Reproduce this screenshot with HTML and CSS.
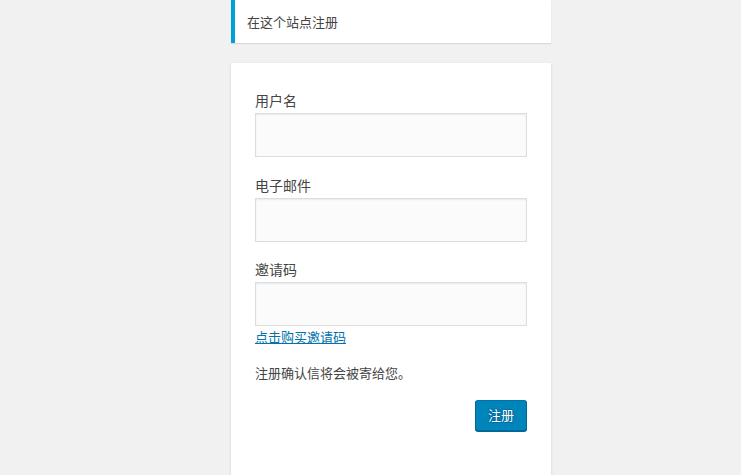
FILE: index.html
```html
<!DOCTYPE html>
<html lang="zh-CN">
<head>
<meta charset="utf-8">
<title>注册</title>
<link rel="stylesheet" href="styles.css">
</head>
<body>
<div class="login">
  <p class="message">在这个站点注册</p>
  <form class="register-form">
    <div class="field">
      <label class="field-label" for="user_login">用户名</label>
      <input class="input" type="text" id="user_login">
    </div>
    <div class="field">
      <label class="field-label" for="user_email">电子邮件</label>
      <input class="input" type="email" id="user_email">
    </div>
    <div class="field field-last">
      <label class="field-label" for="invite">邀请码</label>
      <input class="input" type="text" id="invite">
      <a class="buy-link" href="#">点击购买邀请码</a>
    </div>
    <p class="notice">注册确认信将会被寄给您。</p>
    <div class="submit-row">
      <button class="button-primary" type="button">注册</button>
    </div>
  </form>
</div>
</body>
</html>
```

FILE: styles.css
```css
html, body {
  margin: 0;
  padding: 0;
  background: #f1f1f1;
  height: 100%;
  overflow: hidden;
}
body {
  font-family: "Noto Sans CJK SC", "Noto Sans", "Liberation Sans", sans-serif;
  color: #444;
  font-size: 13px;
}
.login {
  width: 320px;
  margin-left: 231px;
}
.message {
  margin: 0 0 20px;
  background: #fff;
  border-left: 4px solid #00a0d2;
  box-shadow: 0 1px 1px rgba(0,0,0,.1);
  padding: 12px;
  line-height: 19px;
  font-size: 13px;
  color: #444;
}
.register-form {
  background: #fff;
  box-shadow: 0 1px 3px rgba(0,0,0,.13);
  padding: 27px 24px 46px;
}
.field {
  display: flex;
  flex-direction: column;
  margin-bottom: 17.5px;
}
.field-last {
  margin-bottom: 0;
}
.field-label {
  font-size: 14px;
  line-height: 21px;
  color: #444;
}
.input {
  box-sizing: border-box;
  width: 100%;
  height: 44px;
  margin: 2px 0 0;
  padding: 3px;
  font-size: 24px;
  background: #fbfbfb;
  border: 1px solid #ddd;
  box-shadow: inset 0 1px 2px rgba(0,0,0,.07);
  outline: none;
}
.buy-link {
  font-size: 13px;
  line-height: 21px;
  color: #0073aa;
  text-decoration: underline;
  align-self: flex-start;
}
.notice {
  margin: 16px 0 17px;
  font-size: 13px;
  line-height: 20px;
  color: #444;
}
.submit-row {
  display: flex;
  justify-content: flex-end;
}
.button-primary {
  box-sizing: border-box;
  height: 31px;
  width: 52px;
  padding: 0 12px 2px;
  font-family: inherit;
  font-size: 13px;
  line-height: 28px;
  color: #fff;
  background: #0085ba;
  border: 1px solid;
  border-color: #0073aa #006799 #006799;
  border-radius: 3px;
  box-shadow: 0 1px 0 #006799;
  text-shadow: 0 -1px 1px #006799, 1px 0 1px #006799, 0 1px 1px #006799, -1px 0 1px #006799;
  cursor: pointer;
}
```
